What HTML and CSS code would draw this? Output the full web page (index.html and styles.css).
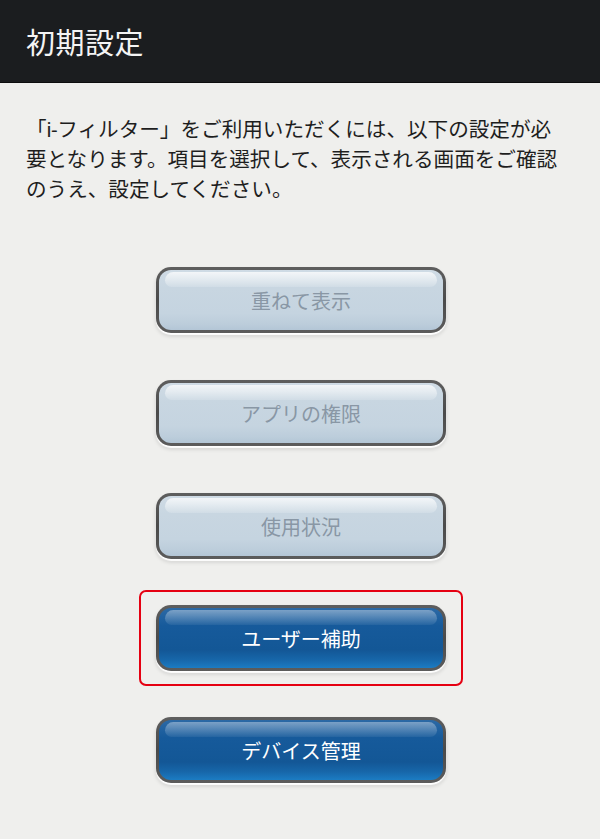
FILE: index.html
```html
<!DOCTYPE html>
<html lang="ja">
<head>
  <meta charset="UTF-8" />
  <meta name="viewport" content="width=device-width, initial-scale=1.0" />
  <title>初期設定</title>
  <link rel="stylesheet" href="styles.css">
</head>
<body>
  <header class="appbar">
    <h1>初期設定</h1>
  </header>

  <main class="content">
    <p class="intro">「i-フィルター」をご利用いただくには、以下の設定が必要となります。項目を選択して、表示される画面をご確認のうえ、設定してください。</p>

    <div class="setting-list">
      <button class="setting-btn done"><span>重ねて表示</span></button>
      <button class="setting-btn done"><span>アプリの権限</span></button>
      <button class="setting-btn done"><span>使用状況</span></button>
      <div class="highlight">
        <button class="setting-btn"><span>ユーザー補助</span></button>
      </div>
      <button class="setting-btn"><span>デバイス管理</span></button>
    </div>
  </main>
</body>
</html>
```

FILE: styles.css
```css
body {
  margin: 0;
  padding: 0;
  background: #efefed;
  font-family: Roboto, "Noto Sans CJK JP", sans-serif;
  color: #1e1e1e;
}
.appbar {
  background: #1b1d1f;
  height: 82px;
  padding: 0 26px;
  display: flex;
  align-items: center;
  border-bottom: 1px solid #0c0d0e;
}
.appbar h1 {
  margin: 0;
  color: #f4f4f4;
  font-size: 29px;
  font-weight: normal;
  letter-spacing: 0.5px;
}
.content {
  padding: 32px 0 40px;
}
.intro {
  margin: 0 0 0 26px;
  width: 541px;
  font-size: 20.6px;
  line-height: 30px;
}
.setting-list {
  margin-top: 62px;
  padding-left: 2px;
  display: flex;
  flex-direction: column;
  align-items: center;
  gap: 47px;
}
.setting-btn {
  width: 290px;
  height: 66px;
  padding: 3px;
  border: none;
  border-radius: 15px;
  background: linear-gradient(to bottom, #5e5e5e, #4a4a4a 50%, #5c5c5c);
  box-shadow: 0 2px 1px rgba(255,255,255,1), 0 3px 4px rgba(0,0,0,0.15);
  font-family: inherit;
  cursor: pointer;
}
.setting-btn span {
  position: relative;
  display: flex;
  align-items: center;
  justify-content: center;
  height: 100%;
  border-radius: 12px;
  font-size: 20px;
  color: #fff;
  background: linear-gradient(to bottom, #2c69a5 0%, #165a9b 30%, #135796 70%, #1766a9 86%, #1b7cc3 100%);
}
.setting-btn span::before {
  content: "";
  position: absolute;
  top: 2px;
  left: 6px;
  right: 6px;
  height: 15px;
  border-radius: 10px 10px 8px 8px;
  background: linear-gradient(to bottom, rgba(255,255,255,0.38), rgba(255,255,255,0.06));
}
.setting-btn.done span {
  color: #8997a5;
  background: linear-gradient(to bottom, #cfdbe5 0%, #c8d6e1 30%, #c5d4e0 72%, #bccddb 90%, #b3c6d6 100%);
}
.setting-btn.done span::before {
  background: linear-gradient(to bottom, rgba(255,255,255,0.75), rgba(255,255,255,0.15));
}
.highlight {
  margin: -16px -17px;
  padding: 13px 15px;
  border: 2px solid #e50012;
  border-radius: 7px;
}
```
